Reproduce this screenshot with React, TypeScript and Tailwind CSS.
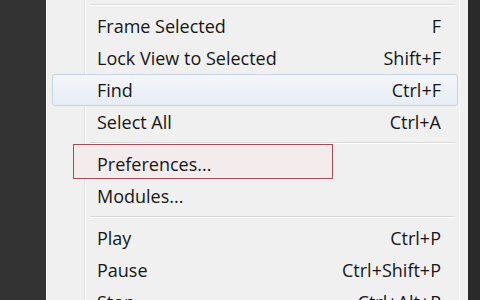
type Item = { label: string; shortcut?: string; active?: boolean };

const groups: Item[][] = [
  [
    { label: 'Frame Selected', shortcut: 'F' },
    { label: 'Lock View to Selected', shortcut: 'Shift+F' },
    { label: 'Find', shortcut: 'Ctrl+F', active: true },
    { label: 'Select All', shortcut: 'Ctrl+A' },
  ],
  [{ label: 'Preferences...' }, { label: 'Modules...' }],
  [
    { label: 'Play', shortcut: 'Ctrl+P' },
    { label: 'Pause', shortcut: 'Ctrl+Shift+P' },
    { label: 'Stop', shortcut: 'Ctrl+Alt+P' },
  ],
];

function Separator() {
  return (
    <div className="flex h-[10px] items-center pl-[43px] pr-[13px]">
      <div className="h-[2px] w-full border-t border-[#d9d9d9] border-b border-b-white" />
    </div>
  );
}

function Row({ item }: { item: Item }) {
  return (
    <div
      className={
        item.active
          ? 'ml-[5px] mr-[10px] flex h-[32px] items-center justify-between rounded-[3px] border border-[#c8d3e2] bg-gradient-to-b from-[#f3f6fa] to-[#e7edf5] pl-[44px] pr-[16px]'
          : 'ml-[5px] mr-[10px] flex h-[32px] items-center justify-between pl-[45px] pr-[17px]'
      }
    >
      <span>{item.label}</span>
      {item.shortcut && <span>{item.shortcut}</span>}
    </div>
  );
}

export default function App() {
  return (
    <div className="flex h-[300px] w-[480px] overflow-hidden bg-[#333333]">
      <div className="w-[46px] shrink-0" />
      <div
        className="relative w-[422px] shrink-0 overflow-hidden border-l border-[#f7f7f7] bg-[#f0f0f0] text-[18px] leading-none text-[#161616]"
        style={{ fontFamily: '"Open Sans", "Noto Sans", sans-serif' }}
      >
        <div className="absolute left-[37px] top-0 h-full w-[2px] border-l border-[#e0e0e0] border-r border-r-white" />
        <div className="absolute right-[8px] top-0 h-full w-px bg-[#f8f8f8]" />
        <div className="absolute left-[26px] top-[144px] h-[35px] w-[260px] border border-[#a84a58] bg-[#f3ebec]" />
        <div className="relative">
          <Separator />
          {groups.map((g, gi) => (
            <div key={gi}>
              {gi > 0 && <Separator />}
              {g.map((item) => (
                <Row key={item.label} item={item} />
              ))}
            </div>
          ))}
        </div>
      </div>
      <div className="flex-1 bg-[#2a2a2a]" />
    </div>
  );
}
